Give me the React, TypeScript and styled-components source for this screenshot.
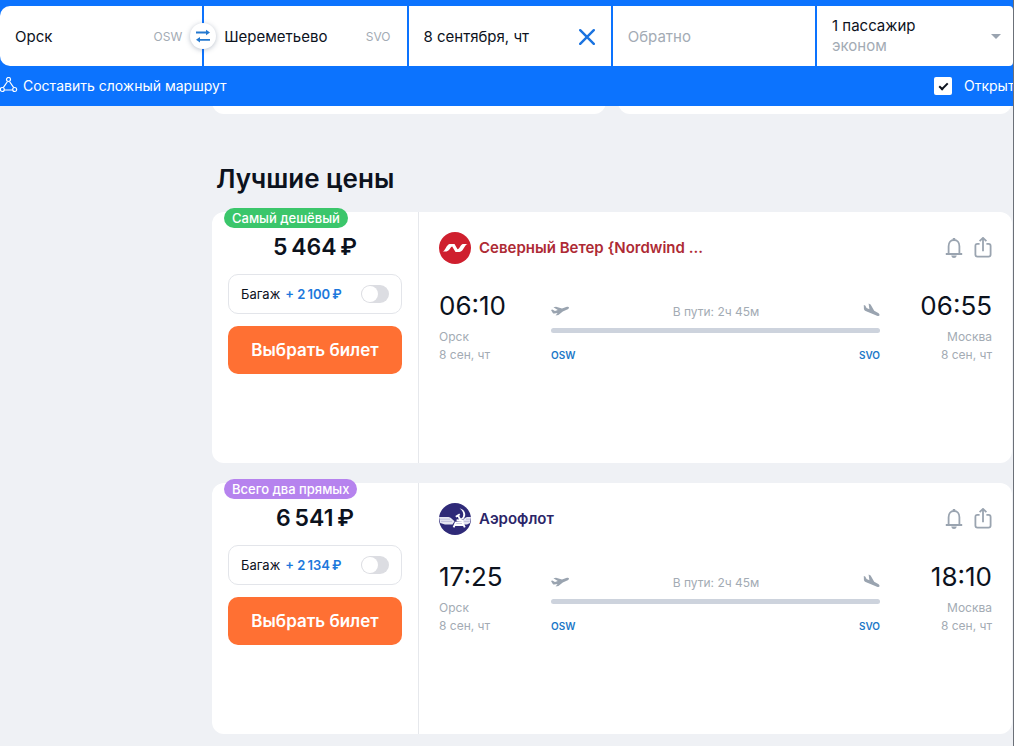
import React from "react";
import styled, { createGlobalStyle } from "styled-components";

const Global = createGlobalStyle`
  *, *::before, *::after { box-sizing: border-box; }
  body { margin: 0; background: #eff1f5; color: #0c121d; font-family: Inter, "Liberation Sans", sans-serif; }
  button, input, select { font-family: inherit; color: inherit; margin: 0; }
  h2, p { margin: 0; }
`;

const Page = styled.div`
  min-height: 100vh;
  border-right: 1px solid #6b7078;
  overflow: hidden;
`;

const Header = styled.header`
  background: #0c73fe;
  padding-top: 6px;
`;

const SearchForm = styled.form`
  display: grid;
  grid-template-columns: repeat(4, minmax(0, 1fr)) 196px;
  gap: 2px;
  height: 60px;
`;

const Field = styled.label<{ $first?: boolean }>`
  position: relative;
  display: flex;
  align-items: center;
  min-width: 0;
  padding: 2px 16px 0 15px;
  background: #fff;
  border-radius: ${(p) => (p.$first ? "10px 0 0 10px" : "0")};
`;

const FieldInput = styled.input<{ $indent?: boolean }>`
  flex: 1;
  min-width: 0;
  border: 0;
  outline: 0;
  padding: 0 0 0 ${(p) => (p.$indent ? "5px" : "0")};
  background: transparent;
  font-size: 15px;
  line-height: 20px;
  &::placeholder { color: #a3abb4; opacity: 1; }
`;

const Iata = styled.span<{ $far?: boolean }>`
  font-size: 12px;
  line-height: 20px;
  color: #a3abb4;
  margin-right: ${(p) => (p.$far ? "4px" : "0")};
`;

const SwapButton = styled.button`
  position: absolute;
  z-index: 1;
  top: 17px;
  right: -14px;
  width: 26px;
  height: 26px;
  padding: 0;
  display: grid;
  place-items: center;
  border: 0;
  border-radius: 50%;
  background: #fff;
  && { color: #2479d0; }
  box-shadow: 0 1px 5px rgba(60, 80, 110, 0.35);
`;

const ClearButton = styled.button`
  display: grid;
  place-items: center;
  width: 16px;
  height: 16px;
  padding: 0;
  border: 0;
  background: none;
  && { color: #1a73e0; }
`;

const Passengers = styled.button`
  display: flex;
  align-items: center;
  justify-content: space-between;
  padding: 0 12px 0 15px;
  border: 0;
  border-radius: 0 4px 4px 0;
  background: #fff;
  text-align: left;
  font-size: 15px;
  line-height: 20px;
`;

const Muted = styled.span`
  display: block;
  color: #a3abb4;
`;

const OptionsBar = styled.div`
  display: flex;
  justify-content: space-between;
  align-items: center;
  height: 40px;
  overflow: hidden;
  color: #fff;
  font-size: 14px;
  line-height: 20px;
  white-space: nowrap;
`;

const RouteLink = styled.a`
  display: flex;
  align-items: center;
  gap: 5px;
  color: inherit;
  text-decoration: none;
`;

const OpenOption = styled.label`
  display: flex;
  align-items: center;
  gap: 12px;
  width: 79px;
  overflow: hidden;
`;

const Tick = styled.input`
  appearance: none;
  flex: none;
  width: 18px;
  height: 18px;
  border-radius: 2px;
  background: #fff;
  display: grid;
  place-items: center;
  &:checked::before {
    content: "";
    width: 9px;
    height: 5px;
    border: solid #0c121d;
    border-width: 0 0 2px 2px;
    transform: translateY(-1px) rotate(-45deg);
  }
`;

const Main = styled.main`
  padding: 0 1px 12px 212px;
`;

const PreviousCards = styled.div`
  display: grid;
  grid-template-columns: 1fr 1fr;
  gap: 12px;
  align-content: end;
  height: 8px;
  overflow: hidden;
`;

const PreviousCard = styled.div`
  height: 24px;
  background: #fff;
  border-radius: 12px;
`;

const Title = styled.h2`
  margin: 49px 0 17px 4px;
  font-size: 26px;
  line-height: 32px;
  font-weight: 600;
`;

const Tickets = styled.div`
  display: grid;
  gap: 20px;
`;

const Ticket = styled.article`
  position: relative;
  display: grid;
  grid-template-columns: 207px minmax(0, 1fr);
  min-height: 251px;
  background: #fff;
  border-radius: 12px;
`;

const Badge = styled.span<{ $color: string }>`
  position: absolute;
  top: -4px;
  left: 12px;
  height: 20px;
  padding: 0 8px;
  border-radius: 10px;
  background: ${(p) => p.$color};
  color: #fff;
  font-size: 13px;
  line-height: 20px;
  font-weight: 500;
`;

const Offer = styled.section`
  display: flex;
  flex-direction: column;
  gap: 12px;
  padding: 22px 16px 0;
  border-right: 1px solid #e6e8ec;
`;

const Price = styled.p`
  height: 28px;
  text-align: center;
  font-size: 23px;
  line-height: 26px;
  font-weight: 600;
`;

const Baggage = styled.label`
  display: flex;
  align-items: center;
  gap: 5px;
  height: 40px;
  padding: 0 12px;
  border: 1px solid #e3e5ea;
  border-radius: 10px;
  font-size: 13px;
  line-height: 16px;
`;

const Extra = styled.span`
  flex: 1;
  color: #1c78dc;
  font-weight: 600;
`;

const Toggle = styled.input`
  appearance: none;
  display: flex;
  align-items: center;
  width: 28px;
  height: 18px;
  padding: 1px;
  border-radius: 9px;
  background: #dcdde2;
  &::before {
    content: "";
    width: 16px;
    height: 16px;
    border-radius: 50%;
    background: #fff;
  }
  &:checked { justify-content: flex-end; background: #1c78dc; }
`;

const SelectButton = styled.button`
  height: 48px;
  padding: 0;
  border: 0;
  border-radius: 10px;
  background: #ff7033;
  && { color: #fff; }
  font-size: 17px;
  line-height: 24px;
  font-weight: 600;
`;

const Flight = styled.section`
  padding: 20px 20px 0;
`;

const Carrier = styled.div`
  display: flex;
  align-items: center;
  gap: 8px;
  height: 32px;
`;

const CarrierName = styled.span<{ $color: string }>`
  flex: 1;
  color: ${(p) => p.$color};
  font-size: 15px;
  line-height: 20px;
  font-weight: 600;
`;

const Actions = styled.div`
  display: flex;
  gap: 11px;
`;

const IconButton = styled.button`
  display: grid;
  padding: 0;
  border: 0;
  background: none;
  && { color: #9aa4b0; }
`;

const Segment = styled.div`
  display: grid;
  grid-template-columns: 112px minmax(0, 1fr) 112px;
  margin-top: 24px;
`;

const Endpoint = styled.div<{ $end?: boolean }>`
  text-align: ${(p) => (p.$end ? "right" : "left")};
`;

const Time = styled.p`
  margin-bottom: 4px;
  font-size: 26px;
  line-height: 36px;
`;

const Place = styled.p`
  color: #a3abb4;
  font-size: 12px;
  line-height: 18px;
`;

const Path = styled.div`
  padding-top: 15px;
`;

const PathTop = styled.div`
  display: flex;
  justify-content: space-between;
  align-items: center;
  height: 16px;
  color: #a3abb4;
  font-size: 12px;
`;

const Line = styled.div`
  height: 5px;
  margin: 9px 0 14px;
  border-radius: 3px;
  background: #cdd3dd;
`;

const Codes = styled.div`
  display: flex;
  justify-content: space-between;
  color: #1c78c8;
  font-size: 10px;
  line-height: 16px;
  font-weight: 600;
`;

const NordwindLogo = () => (
  <svg width="32" height="32" viewBox="0 0 32 32" aria-hidden="true">
    <circle cx="16" cy="16" r="16" fill="#cf1f2e" />
    <path d="M3.5 19.5 C6 19.5 7.5 12.5 10.5 12 H15.5 L18.5 17.2 C20.5 17.2 21.5 12.5 24 12 H28.5 C25.5 12.8 24.5 19.5 20.5 20 H16.5 L13.2 14.6 C11.5 14.8 10.5 19.2 7.5 19.5 Z" fill="#fff" />
  </svg>
);

const AeroflotLogo = () => (
  <svg width="32" height="32" viewBox="0 0 32 32" aria-hidden="true">
    <circle cx="16" cy="16" r="16" fill="#2f2a78" />
    <path d="M0 14 H9.5 C12 14.4 13 16 15.5 18.2 L13.5 21.5 H6 L1.2 20 Z M32 14 H28 C25.5 14.6 24.5 17 22.8 18.2 L24.5 21.5 H28 L31 20 Z" fill="#e6e6f2" />
    <path d="M1 16.2 H11 M2 18.4 H13 M31 16.2 H27 M30.5 18.4 H25" stroke="#9d9bc6" strokeWidth="0.5" />
    <path d="M20.5 5.2 C25.8 6.4 28 12 24.8 15.4 C23 17.4 20.4 17.2 19 15.6 C21 16.2 23.2 15.4 24 13.4 C25 10.6 23.6 7.4 20.5 5.2 Z" fill="#fff" />
    <path d="M16.8 13.8 L20.8 11.2 M19 12.6 L22 17.8 M17.6 17.2 L24 17.8 M16.8 19.5 L14.6 24.4 M15.6 22 H25 M23.4 19.5 L25.8 24.4 M16 19.8 H24" fill="none" stroke="#fff" strokeWidth="1.9" />
  </svg>
);

const Bell = () => (
  <svg width="18" height="22" viewBox="0 0 18 22" fill="none" stroke="currentColor" strokeWidth="1.8" aria-hidden="true">
    <path d="M0.8 17 H17.2 M3.6 16.8 V9.2 C3.6 5.2 6 3 9 3 C12 3 14.4 5.2 14.4 9.2 V16.8" />
    <path d="M7.8 1 H10.2 V3 H7.8 Z M6.2 18.5 H11.8 C11.4 20.2 10.4 21 9 21 C7.6 21 6.6 20.2 6.2 18.5 Z" fill="currentColor" stroke="none" />
  </svg>
);

const Share = () => (
  <svg width="18" height="22" viewBox="0 0 18 22" fill="none" stroke="currentColor" strokeWidth="1.8" aria-hidden="true">
    <path d="M5.6 6.8 H3.5 C1.9 6.8 1.4 7.5 1.4 8.9 V17.5 C1.4 19.1 2 19.6 3.5 19.6 H14.5 C16 19.6 16.6 19.1 16.6 17.5 V8.9 C16.6 7.5 16.1 6.8 14.5 6.8 H12.4 M9 14.2 V1.2 M5.6 4.2 L9 0.9 L12.4 4.2" />
  </svg>
);

const Takeoff = () => (
  <svg width="18" height="10" viewBox="0 0 18 10" fill="#9aa4b0" aria-hidden="true">
    <path d="M0 4 L1.3 3.5 L4 4.9 L6.8 4 L2.4 1.2 L5 0.8 L11 2.6 L15.2 1.1 C16.8 0.6 17.8 0.9 18 1.5 C18.1 2.4 17.2 3.1 16.2 3.5 L11.8 5.4 L7.4 9 L4.6 9.6 L6.6 7 L3.2 7.6 C2.6 7.7 2.2 7.4 1.8 6.9 Z" />
  </svg>
);

const Landing = () => (
  <svg width="17" height="16" viewBox="0 0 17 16" fill="#9aa4b0" aria-hidden="true">
    <path d="M0.8 2 L2.2 2.6 L3.6 4.9 L6.4 6.2 L5.6 0.4 L7.6 1.4 L11.2 7.8 L14.8 9.7 C16 10.4 16.8 11.4 16.5 12.3 C16.1 13.3 15 13.1 14 12.7 L3.2 8.2 C1.4 7.4 0.9 6.6 0.9 5.4 Z" />
  </svg>
);

type TicketData = {
  badge: string;
  color: string;
  price: string;
  extra: string;
  carrier: string;
  carrierColor: string;
  logo: React.ReactNode;
  depart: string;
  arrive: string;
};

const tickets: TicketData[] = [
  {
    badge: "Самый дешёвый",
    color: "#3bc66b",
    price: "5\u2009464\u2009₽",
    extra: "+ 2\u2009100\u2009₽",
    carrier: "Северный Ветер {Nordwind ...",
    carrierColor: "#ae2a34",
    logo: <NordwindLogo />,
    depart: "06:10",
    arrive: "06:55",
  },
  {
    badge: "Всего два прямых",
    color: "#b683ee",
    price: "6\u2009541\u2009₽",
    extra: "+ 2\u2009134\u2009₽",
    carrier: "Аэрофлот",
    carrierColor: "#2b2568",
    logo: <AeroflotLogo />,
    depart: "17:25",
    arrive: "18:10",
  },
];

const TicketCard = ({ t }: { t: TicketData }) => (
  <Ticket>
    <Badge $color={t.color}>{t.badge}</Badge>
    <Offer>
      <Price>{t.price}</Price>
      <Baggage>
        Багаж <Extra>{t.extra}</Extra>
        <Toggle type="checkbox" role="switch" />
      </Baggage>
      <SelectButton type="button">Выбрать билет</SelectButton>
    </Offer>
    <Flight>
      <Carrier>
        {t.logo}
        <CarrierName $color={t.carrierColor}>{t.carrier}</CarrierName>
        <Actions>
          <IconButton type="button" aria-label="Следить за ценой"><Bell /></IconButton>
          <IconButton type="button" aria-label="Поделиться"><Share /></IconButton>
        </Actions>
      </Carrier>
      <Segment>
        <Endpoint>
          <Time>{t.depart}</Time>
          <Place>Орск</Place>
          <Place>8 сен, чт</Place>
        </Endpoint>
        <Path>
          <PathTop>
            <Takeoff />
            <span>В пути: 2ч 45м</span>
            <Landing />
          </PathTop>
          <Line />
          <Codes><span>OSW</span><span>SVO</span></Codes>
        </Path>
        <Endpoint $end>
          <Time>{t.arrive}</Time>
          <Place>Москва</Place>
          <Place>8 сен, чт</Place>
        </Endpoint>
      </Segment>
    </Flight>
  </Ticket>
);

export default function App() {
  return (
    <Page>
      <Global />
      <Header>
        <SearchForm>
          <Field $first>
            <FieldInput aria-label="Откуда" defaultValue="Орск" />
            <Iata $far>OSW</Iata>
            <SwapButton type="button" aria-label="Поменять местами">
              <svg width="14" height="14" viewBox="0 0 14 14" fill="none" stroke="currentColor" strokeWidth="1.8" aria-hidden="true">
                <path d="M0 3.5 H12 M14 10.8 H2" />
                <path d="M10 0.8 L14 3.5 L10 6.2 Z M4 8.1 L0 10.8 L4 13.5 Z" fill="currentColor" stroke="none" />
              </svg>
            </SwapButton>
          </Field>
          <Field>
            <FieldInput aria-label="Куда" defaultValue="Шереметьево" $indent />
            <Iata>SVO</Iata>
          </Field>
          <Field>
            <FieldInput aria-label="Дата вылета" defaultValue="8 сентября, чт" />
            <ClearButton type="button" aria-label="Очистить дату">
              <svg width="16" height="16" viewBox="0 0 16 16" stroke="currentColor" strokeWidth="2.4" strokeLinecap="round" aria-hidden="true">
                <path d="M1.2 1.2 L14.8 14.8 M14.8 1.2 L1.2 14.8" />
              </svg>
            </ClearButton>
          </Field>
          <Field>
            <FieldInput aria-label="Обратно" placeholder="Обратно" />
          </Field>
          <Passengers type="button">
            <span>
              1 пассажир
              <Muted>эконом</Muted>
            </span>
            <svg width="10" height="5" viewBox="0 0 10 5" fill="#9aa4b0" aria-hidden="true"><path d="M0 0 H10 L5 5 Z" /></svg>
          </Passengers>
        </SearchForm>
        <OptionsBar>
          <RouteLink href="#">
            <svg width="18" height="18" viewBox="0 0 18 18" fill="none" stroke="currentColor" strokeWidth="1.2" aria-hidden="true">
              <circle cx="8.5" cy="2.5" r="2" />
              <circle cx="2.3" cy="12.5" r="2" />
              <circle cx="14.7" cy="12.5" r="2" />
              <path d="M7.5 4.5 L3.3 10.7 M9.5 4.5 L13.7 10.7 M4.5 13 H12.5" />
            </svg>
            Составить сложный маршрут
          </RouteLink>
          <OpenOption>
            <Tick type="checkbox" defaultChecked />
            Открыть
          </OpenOption>
        </OptionsBar>
      </Header>
      <Main>
        <PreviousCards><PreviousCard /><PreviousCard /></PreviousCards>
        <Title>Лучшие цены</Title>
        <Tickets>{tickets.map((t) => <TicketCard key={t.badge} t={t} />)}</Tickets>
      </Main>
    </Page>
  );
}
